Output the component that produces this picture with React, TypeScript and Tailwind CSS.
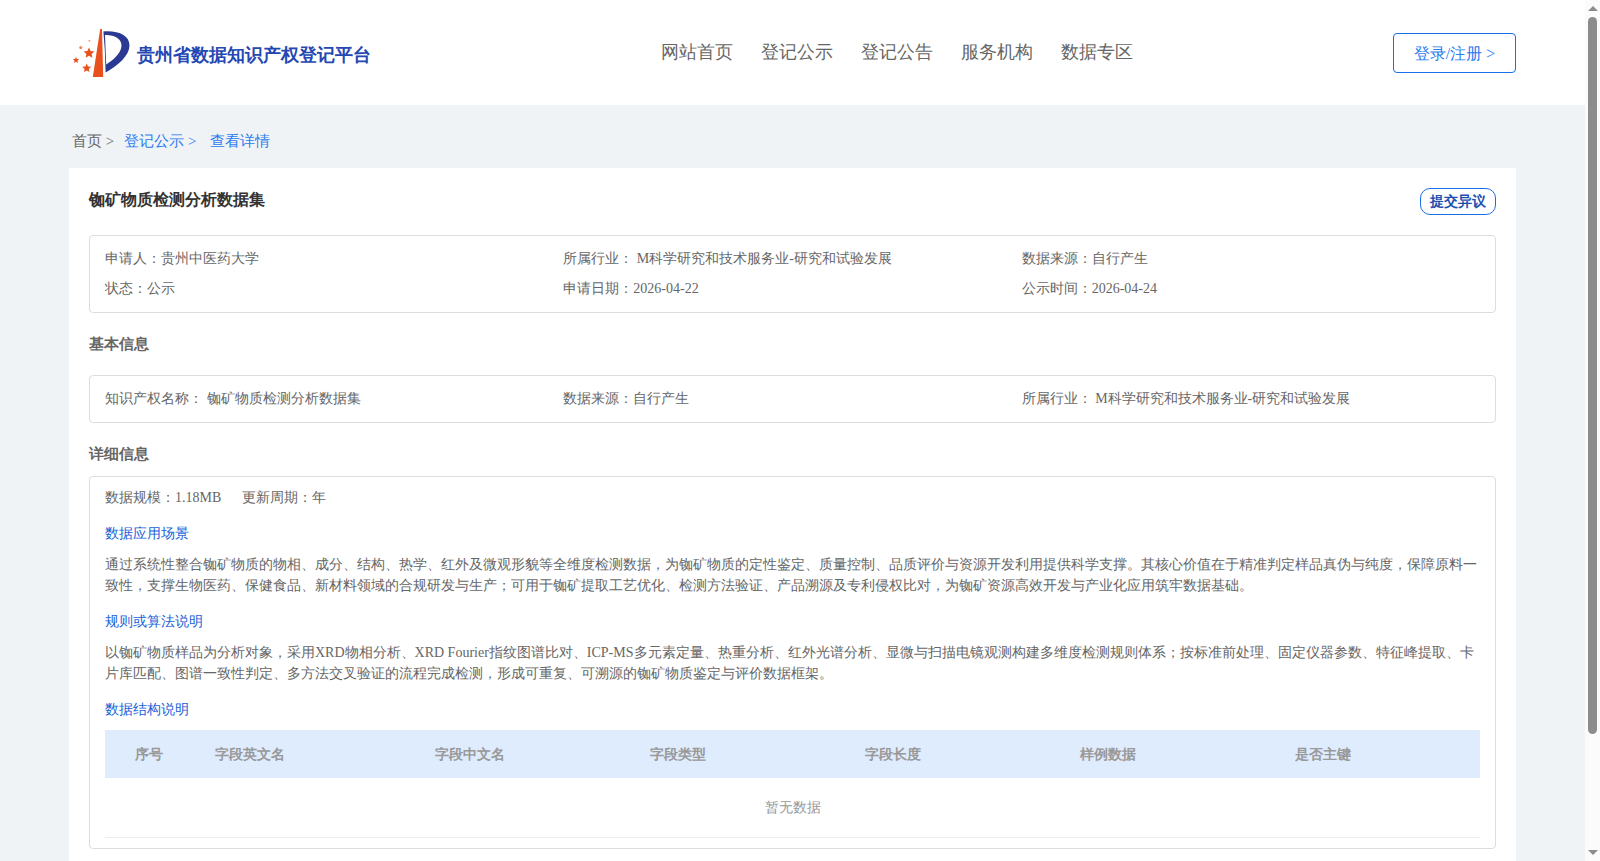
const font = "[font-family:'Liberation_Serif',serif]";

function Logo() {
  return (
    <svg width="62" height="54" viewBox="70 27 62 54" className="mt-[3px] shrink-0">
      <path d="M100.2 29 L102 29 L103.2 77 L92.8 77 Z" fill="#e8501e" />
      <path
        fillRule="evenodd"
        d="M103.4 31.5 C119 30.5 129.5 35.5 129.5 45.5 C129.5 55.5 118 65.5 105.6 72.5 L104.8 50 Z M105 35 L106.2 64.5 C114 59.5 121.5 52.5 121.5 45.5 C121.5 38.5 114 34.6 105 35 Z"
        fill="#2a3a92"
      />
      <polygon points="89,47.5 90.6,51 94.4,51.4 91.6,53.9 92.4,57.7 89,55.8 85.6,57.7 86.4,53.9 83.6,51.4 87.4,51" fill="#e8501e" />
      <polygon points="76,56.8 76.9,58.9 79.2,59.1 77.5,60.6 78,62.9 76,61.7 74,62.9 74.5,60.6 72.8,59.1 75.1,58.9" fill="#e8501e" />
      <polygon points="86.7,63.6 88,66.5 91.2,66.8 88.8,68.9 89.5,72 86.7,70.4 83.9,72 84.6,68.9 82.2,66.8 85.4,66.5" fill="#e8501e" />
      <circle cx="80.8" cy="47.6" r="1.6" fill="#ee8a60" />
      <circle cx="89.4" cy="40.8" r="1" fill="#f0a080" />
    </svg>
  );
}

function Info({ children }: { children: React.ReactNode }) {
  return <div className="h-[30px] leading-[30px] whitespace-nowrap">{children}</div>;
}

function SectionTitle({ children, className }: { children: React.ReactNode; className: string }) {
  return <div className={`text-[15px] font-bold leading-6 text-[#666666] ${className}`}>{children}</div>;
}

function Heading({ children, className }: { children: React.ReactNode; className: string }) {
  return <div className={`text-[14px] leading-[21px] text-[#1a5fd8] ${className}`}>{children}</div>;
}

const cols = ["字段英文名", "字段中文名", "字段类型", "字段长度", "样例数据", "是否主键"];

export default function App() {
  return (
    <div className={`flex h-screen overflow-hidden bg-[#eff3f6] ${font}`}>
      <main className="min-w-0 flex-1 overflow-hidden">
        <header className="flex h-[105px] items-center bg-white pl-[70px] pr-[69px]">
          <div className="flex w-[591px] items-center">
            <Logo />
            <span className="ml-[5px] mt-[5px] text-[18px] font-bold text-[#2447b3]">贵州省数据知识产权登记平台</span>
          </div>
          <nav className="flex gap-7 text-[18px] text-[#666666]">
            <span>网站首页</span>
            <span>登记公示</span>
            <span>登记公告</span>
            <span>服务机构</span>
            <span>数据专区</span>
          </nav>
          <button className="ml-auto h-10 w-[123px] rounded border border-[#1a6fe8] pt-[2px] text-[16px] text-[#2a7cf0]">登录/注册 &gt;</button>
        </header>

        <div className="mx-[69px]">
          <div className="flex h-[63px] items-center whitespace-pre pl-[3px] pt-[9px] text-[15px]">
            <span className="mr-[10px] text-[#666666]">首页 &gt;</span>
            <span className="mr-[14px] text-[#2a7cf0]">登记公示 &gt;</span>
            <span className="text-[#2a7cf0]">查看详情</span>
          </div>

          <section className="bg-white px-5 pt-5 text-[14px] text-[#666666]">
            <div className="flex items-start justify-between">
              <h1 className="text-[16px] font-bold leading-6 text-[#333333]">铷矿物质检测分析数据集</h1>
              <button className="h-[27px] w-[76px] rounded-[10px] border border-[#1a6fe8] text-[14px] font-bold text-[#1d4fb0]">提交异议</button>
            </div>

            <div className="mt-5 grid grid-cols-3 rounded border border-[#dddddd] px-[15px] pb-[8px] pt-[8px]">
              <Info>申请人：贵州中医药大学</Info>
              <Info>所属行业： M科学研究和技术服务业-研究和试验发展</Info>
              <Info>数据来源：自行产生</Info>
              <Info>状态：公示</Info>
              <Info>申请日期：2026-04-22</Info>
              <Info>公示时间：2026-04-24</Info>
            </div>

            <SectionTitle className="mt-[19px]">基本信息</SectionTitle>
            <div className="mt-[19px] grid grid-cols-3 rounded border border-[#dddddd] px-[15px] py-2">
              <Info>知识产权名称： 铷矿物质检测分析数据集</Info>
              <Info>数据来源：自行产生</Info>
              <Info>所属行业： M科学研究和技术服务业-研究和试验发展</Info>
            </div>

            <SectionTitle className="mt-[19px]">详细信息</SectionTitle>
            <div className="mt-[10px] rounded border border-[#dddddd] px-[15px] pb-[10px] pt-[6px]">
              <div className="flex gap-[21px]">
                <Info>数据规模：1.18MB</Info>
                <Info>更新周期：年</Info>
              </div>
              <Heading className="mt-[10px]">数据应用场景</Heading>
              <p className="mt-[10px] leading-[21px]">
                通过系统性整合铷矿物质的物相、成分、结构、热学、红外及微观形貌等全维度检测数据，为铷矿物质的定性鉴定、质量控制、品质评价与资源开发利用提供科学支撑。其核心价值在于精准判定样品真伪与纯度，保障原料一致性，支撑生物医药、保健食品、新材料领域的合规研发与生产；可用于铷矿提取工艺优化、检测方法验证、产品溯源及专利侵权比对，为铷矿资源高效开发与产业化应用筑牢数据基础。
              </p>
              <Heading className="mt-[15px]">规则或算法说明</Heading>
              <p className="mt-[10px] leading-[21px]">
                以铷矿物质样品为分析对象，采用XRD物相分析、XRD Fourier指纹图谱比对、ICP-MS多元素定量、热重分析、红外光谱分析、显微与扫描电镜观测构建多维度检测规则体系；按标准前处理、固定仪器参数、特征峰提取、卡片库匹配、图谱一致性判定、多方法交叉验证的流程完成检测，形成可重复、可溯源的铷矿物质鉴定与评价数据框架。
              </p>
              <Heading className="mt-[15px]">数据结构说明</Heading>
              <div className="mt-[10px] grid h-12 grid-cols-[110px_219.6px_215px_215px_215px_215px_1fr] items-center bg-[#dfecfe] font-bold text-[#999999]">
                <span className="pl-[30px]">序号</span>
                {cols.map((c) => (
                  <span key={c}>{c}</span>
                ))}
              </div>
              <div className="flex h-[60px] items-center justify-center border-b border-[#eeeeee] text-[#999999]">暂无数据</div>
            </div>
            <div className="h-10" />
          </section>
        </div>
      </main>

      <aside className="flex w-[15px] shrink-0 flex-col items-center bg-[#fbfbfb]">
        <div className="mt-[6px] h-0 w-0 border-x-[5px] border-b-[5px] border-x-transparent border-b-[#8c8c8c]" />
        <div className="mt-[6px] h-[717px] w-[9px] rounded-[5px] bg-[#8c8c8c]" />
        <div className="mb-[6px] mt-auto h-0 w-0 border-x-[5px] border-t-[5px] border-x-transparent border-t-[#8c8c8c]" />
      </aside>
    </div>
  );
}
